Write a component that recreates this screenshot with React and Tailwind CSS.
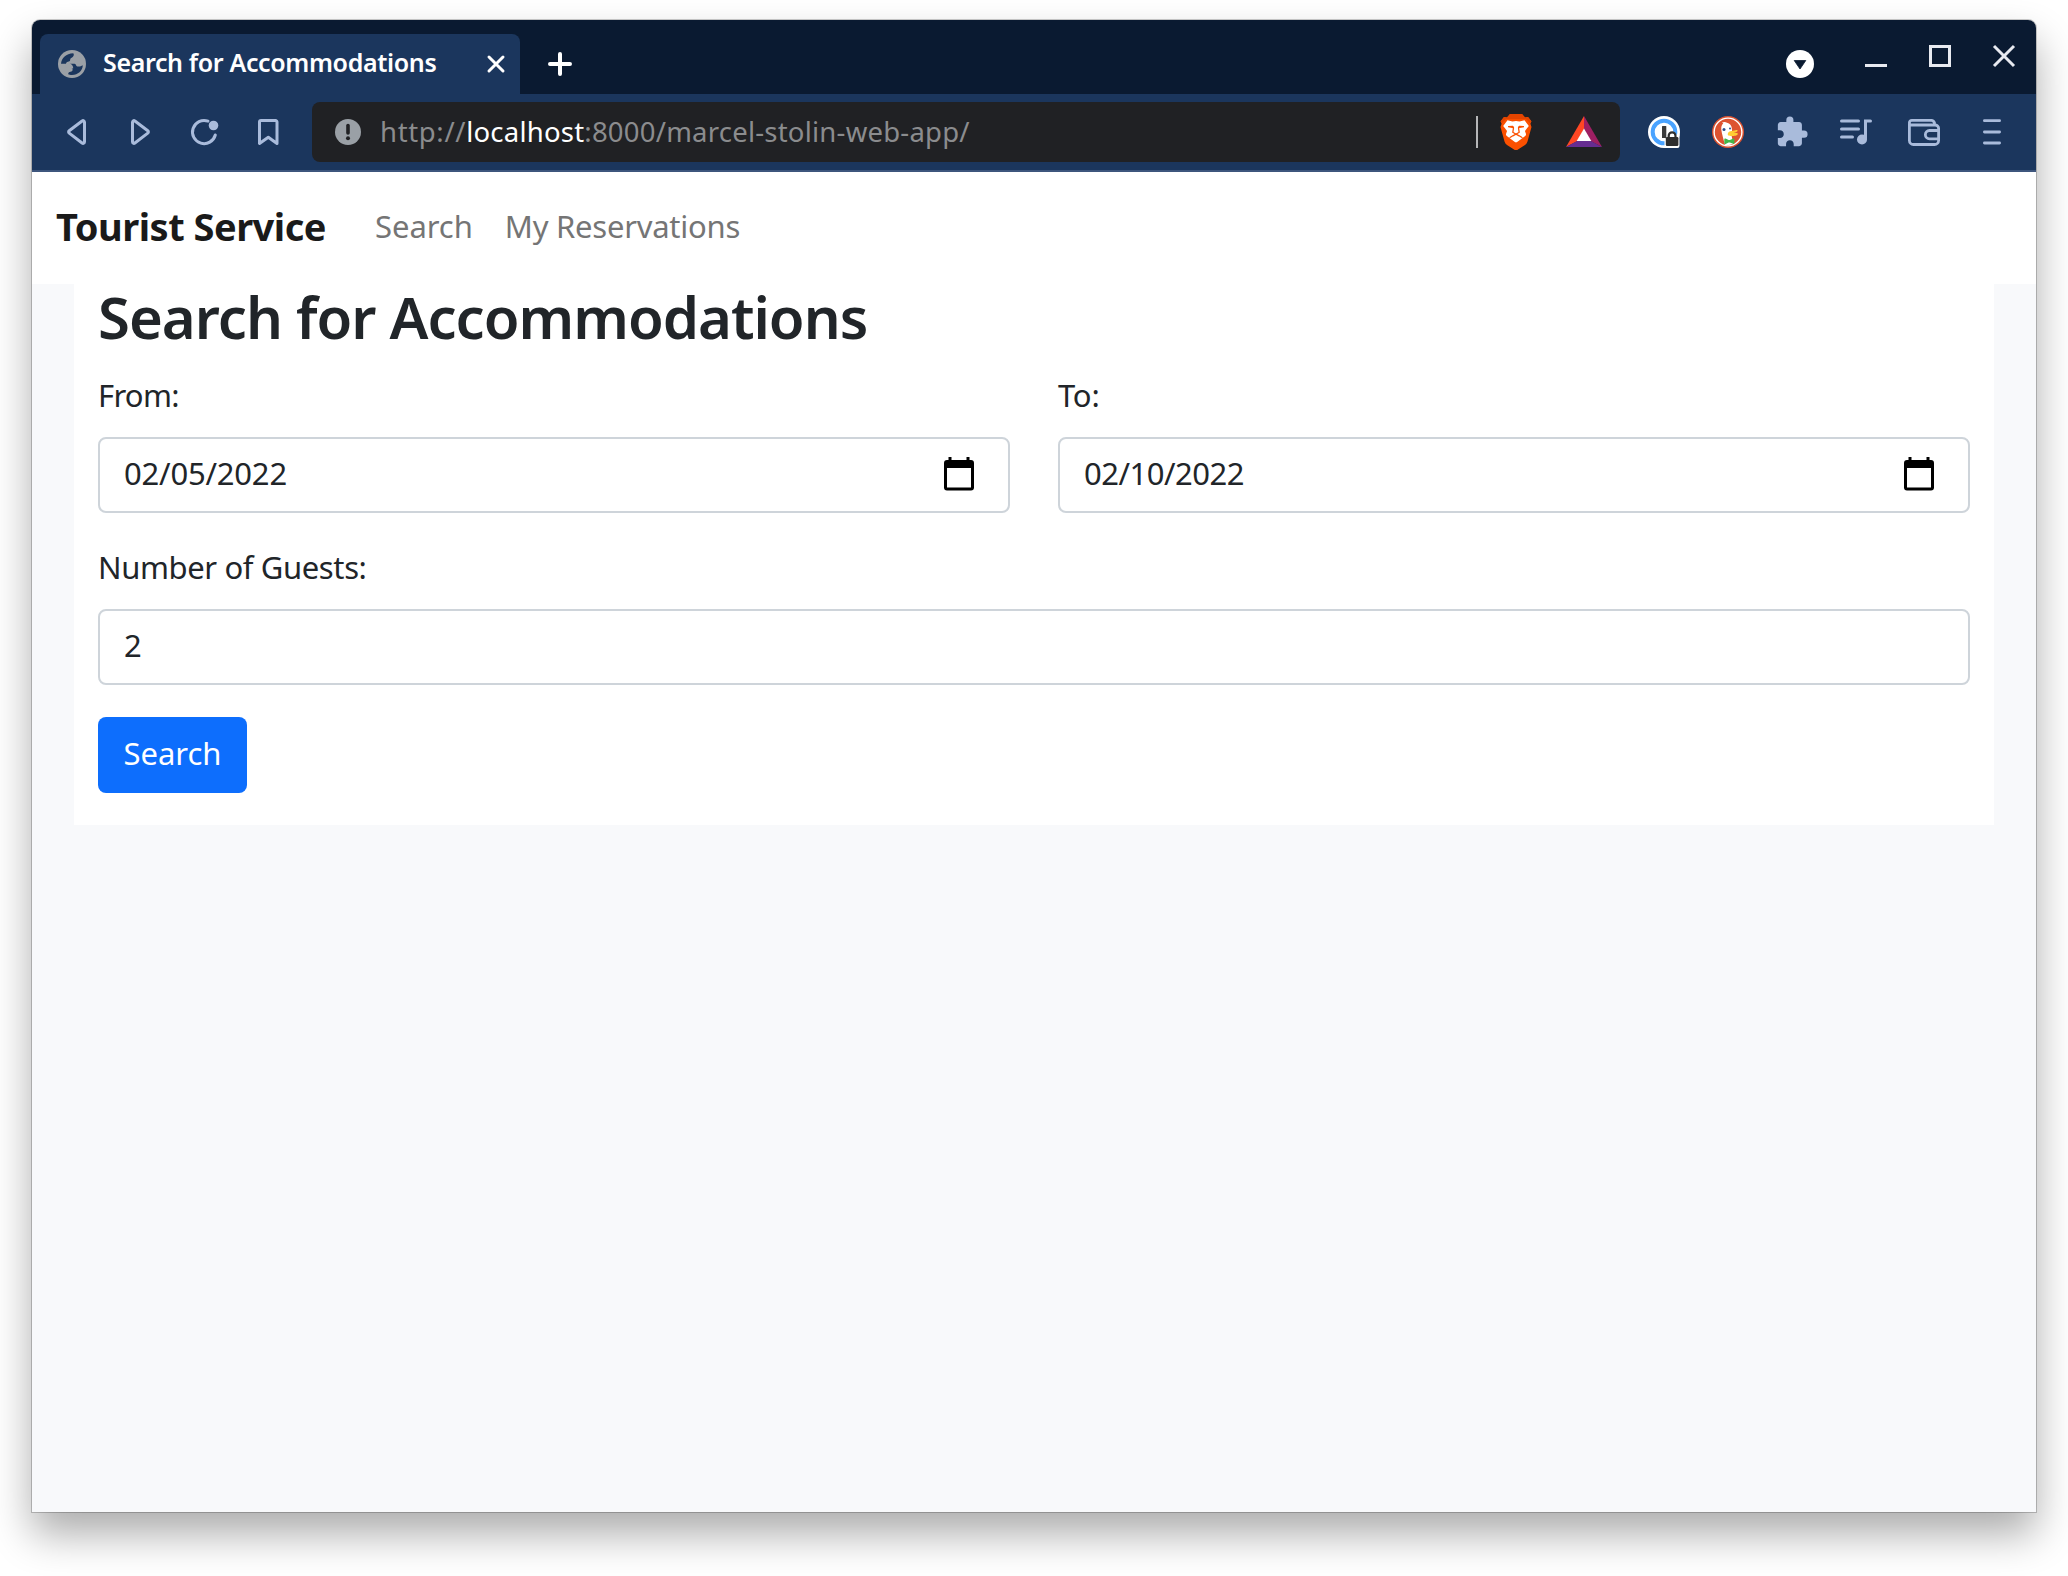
import { MdExtension } from "react-icons/md";

function ToolButton({ label, wide, children }) {
  return (
    <button
      aria-label={label}
      className={`flex h-16 shrink-0 items-center justify-center text-[#a9bbdb] ${wide ? "w-[72px]" : "w-16"}`}
    >
      {children}
    </button>
  );
}

function Icon({ children }) {
  return (
    <svg
      viewBox="0 0 32 32"
      className="block size-8 shrink-0"
      fill="none"
      stroke="currentColor"
      strokeWidth="3"
      strokeLinecap="round"
      strokeLinejoin="round"
    >
      {children}
    </svg>
  );
}

function GlobeIcon() {
  return (
    <svg viewBox="0 0 28 28" className="block size-7 shrink-0">
      <circle cx="14" cy="14" r="14" fill="#9ba0a6" />
      <path
        d="M3 13.800C3.500 8.200 8 3.800 15.300 3.300c1.300 1.700.2 3.500-2 4.700-1.400.7-.9 1.800-1.300 2.700-.5 1-1.900.8-2.800 1.200-.8.500-.6 1.900-1.900 1.900z"
        fill="#1b365d"
      />
      <path
        d="M11.500 13.800h5c1.300 0 1.300 1.200 2 2.100.7.900 2.300.7 3.500.5l2.800-1.200C24.600 20.500 20 25 14 25c-1.500 0-3-.3-3.800-.7 0-1.700.7-2.500 2.300-2.600 1.500 0 2.100-.8 2.100-2.200 0-1.200-.9-1.600-2-1.700-1.300-.1-3.300.2-4.100-.8-.9-1-.4-3.200 3-3.200z"
        fill="#1b365d"
      />
      <path d="M8.600 12.500c2 0 3 .3 4.600 1.700 1.300 1.200 2 1.900 2 4.300l-2.300-.2c-2.500-.2-4.800.3-5.800-1.600z" fill="#9ba0a6" />
    </svg>
  );
}

function BraveIcon() {
  return (
    <svg viewBox="0 0 32 36" className="block h-9 w-8 shrink-0">
      <path
        d="M10 0h12l3 3.400 3-.4 3.400 4.200-1 2.600 1.100 3.200-4 14.600a6 6 0 0 1-2.500 3.400l-7.400 4.700a3 3 0 0 1-3.200 0L7 31a6 6 0 0 1-2.500-3.400L.5 13l1.100-3.200-1-2.600L4 3l3 .4z"
        fill="#fb5000"
      />
      <path d="M10 0h12l3 3.400 3-.4 3.400 4.200-1.400 2L26 5H6L2 9.200.6 7.200 4 3l3 .4z" fill="#e44400" />
      <path
        d="M16 7l3.500.5L24.500 6.300l4.300 5.700-3.500 4.500c-.4.600-.3 1.200.2 1.900l.5 1.500c.2.900-.2 1.500-.8 2.200l-2.700 2-5 3.700-1.500.7-1.500-.7-5-3.700-2.700-2c-.6-.7-1-1.300-.8-2.200l.5-1.500c.5-.7.6-1.300.2-1.900L3.200 12l4.300-5.700 5 1.200z"
        fill="#fff"
      />
      <path d="M8 12l4.800-.2 1.300 1.200-.3 1.400-1.600-.3L8 13.300zM24 12l-4.800-.2-1.300 1.200.3 1.400 1.600-.3 4.200-.8z" fill="#fb5000" />
      <g stroke="#fb5000" strokeWidth="1.300" fill="none" strokeLinejoin="round" strokeLinecap="round">
        <path d="M13.500 14l-.7 4.300 3.200 1.900 3.200-1.900-.7-4.300" />
        <path d="M10 23.500l2.800-1.700L16 20.200l3.200 1.600 2.800 1.700" />
      </g>
      <path d="M12 24.200l4-2.300 4 2.300-4 3.600z" fill="#fff" />
    </svg>
  );
}

function RewardsIcon() {
  return (
    <svg viewBox="0 0 36 32" className="block h-8 w-9 shrink-0">
      <path d="M18 0L0 31l11.500-6L18 13z" fill="#ff4724" />
      <path d="M18 0l18 31-11.500-6L18 13z" fill="#9e1f63" />
      <path d="M0 31l11-6h14l11 6z" fill="#662d91" />
      <path d="M18 12.500L25.300 25H10.700z" fill="#fff" />
    </svg>
  );
}

function PasswordIcon() {
  return (
    <svg viewBox="0 0 32 32" className="block size-8 shrink-0">
      <circle cx="16" cy="16" r="16" fill="#fff" />
      <circle cx="16" cy="16" r="11.300" fill="none" stroke="#4aa3ff" strokeWidth="4" />
      <path d="M16.500 21.500L20 18c1-2 2.500-2.500 4-2.500s3.500 1 4 3h3.500V30a2 2 0 0 1-2 2h-13z" fill="#fff" />
      <rect x="14" y="10" width="4.300" height="12" rx=".6" fill="#3a3a3a" />
      <rect x="17.800" y="21" width="12.600" height="9" rx="1.300" fill="#2e2e2e" />
      <path d="M20.700 21.500v-1.700a3.400 3.400 0 0 1 6.800 0v1.700" fill="none" stroke="#2e2e2e" strokeWidth="2.200" />
    </svg>
  );
}

function DuckIcon() {
  return (
    <svg viewBox="0 0 32 32" className="block size-8 shrink-0">
      <circle cx="16" cy="16" r="16" fill="#dd5331" />
      <circle cx="16" cy="16" r="13.900" fill="none" stroke="#fff" strokeWidth="1.400" />
      <path
        d="M13 28.700C11.500 23.500 9.800 18 9.300 13.800c-.3-3 .4-5 2-6.200L10 6.600c1.900-.9 3.600-.7 5 .1 2.900.5 4.600 2.700 4.900 6 .3 3-.2 5-.2 7.500l1.500 7.200c-2.600 1.400-5.500 1.900-8.200 1.300z"
        fill="#fff"
      />
      <path
        d="M15.700 18c.3-1.900 2-2.600 4-2.900 2-.2 4.500-1.500 5.800-.8.700.9-1.700 2.300-4 2.800 2 .1 4-.3 4.300.7.200 1.400-2.600 2.200-5.200 2.200-2.700 0-5.100-.3-4.900-2z"
        fill="#fc3"
      />
      <circle cx="12" cy="13.600" r="1.500" fill="#2d4f8e" />
      <circle cx="18" cy="12.400" r="1" fill="#2d4f8e" />
      <path
        d="M12.300 23.200c0-.8.600-1 1.300-.6l3 1.400h1.300l3.400-1.500c.7-.3 1.100 0 1.100.7v4c0 .7-.5.9-1.200.6l-3.300-1.400h-1.300l-3 1.500c-.7.3-1.300 0-1.300-.7z"
        fill="#43b649"
      />
    </svg>
  );
}

function CalendarIcon() {
  return (
    <svg viewBox="0 0 30 34" className="mb-[3px] block h-[34px] w-[30px] shrink-0">
      <path
        d="M4.500 0h3v3h15V0h3v3H27a3 3 0 0 1 3 3v24.500a3 3 0 0 1-3 3H3a3 3 0 0 1-3-3V6a3 3 0 0 1 3-3h1.500zM3 11v19.500h24V11z"
        fill="#000"
        fillRule="evenodd"
      />
    </svg>
  );
}

function TabStrip() {
  return (
    <div className="flex h-[74px] items-end bg-[#0a1a31]">
      <div className="ml-2 flex h-[60px] w-[480px] items-center rounded-t-lg bg-[#1b365d] pl-[18px] pr-[14px]">
        <GlobeIcon />
        <span className="ml-[17px] flex-1 whitespace-nowrap pb-1 text-[25px] leading-[32px] font-[560] tracking-[-0.36px] text-white">
          Search for Accommodations
        </span>
        <svg viewBox="0 0 20 20" className="size-5 shrink-0" stroke="#fff" strokeWidth="3" strokeLinecap="round">
          <path d="M3 3l14 14M17 3L3 17" />
        </svg>
      </div>
      <div className="flex h-[60px] w-20 items-center justify-center">
        <svg viewBox="0 0 24 24" className="size-6" stroke="#fff" strokeWidth="4" strokeLinecap="round">
          <path d="M12 2v20M2 12h20" />
        </svg>
      </div>
      <div className="ml-auto flex h-[60px] items-center">
        <svg viewBox="0 0 28 28" className="mr-[30px] size-7">
          <circle cx="14" cy="14" r="14" fill="#fff" />
          <path d="M8.200 10.500h11.600L14 19z" fill="#0a1a31" stroke="#0a1a31" strokeWidth=".8" strokeLinejoin="round" />
        </svg>
        <div className="mb-4 flex text-[#e8eaf0]">
          <div className="flex w-16 justify-center">
            <svg viewBox="0 0 24 24" className="size-6">
              <path d="M1 20h22v3H1z" fill="currentColor" />
            </svg>
          </div>
          <div className="flex w-16 justify-center">
            <svg viewBox="0 0 24 24" className="size-6">
              <path d="M2.500 2.500h19v19h-19z" fill="none" stroke="currentColor" strokeWidth="3" />
            </svg>
          </div>
          <div className="flex w-16 justify-center">
            <svg viewBox="0 0 24 24" className="size-6">
              <path d="M2 2l20 20M22 2L2 22" stroke="currentColor" strokeWidth="3" />
            </svg>
          </div>
        </div>
      </div>
    </div>
  );
}

function Toolbar() {
  return (
    <div className="flex h-[78px] items-center border-b-2 border-[#3e567d] bg-[#1b365d] pl-3">
      <ToolButton label="Back">
        <Icon>
          <path d="M24.500 6.300c0-1.600-1.300-2.200-2.400-1.300L9.200 14.800c-.8.600-.8 1.700 0 2.300l12.900 9.900c1.100.9 2.400.3 2.400-1.300z" />
        </Icon>
      </ToolButton>
      <ToolButton label="Forward">
        <Icon>
          <path d="M8.500 6.300c0-1.600 1.300-2.200 2.400-1.300l12.900 9.800c.8.600.8 1.700 0 2.300L10.900 27c-1.100.9-2.400.3-2.400-1.300z" />
        </Icon>
      </ToolButton>
      <ToolButton label="Reload">
        <Icon>
          <path d="M27.300 19A11.600 11.600 0 1 1 20 5.100" />
          <circle cx="25.500" cy="9.500" r="4.800" fill="currentColor" stroke="none" />
        </Icon>
      </ToolButton>
      <ToolButton label="Bookmark">
        <Icon>
          <path d="M7.500 6a1.500 1.500 0 0 1 1.500-1.500h14.500A1.500 1.500 0 0 1 25 6v21.500l-8.700-6.300-8.800 6.300z" />
        </Icon>
      </ToolButton>

      <div className="ml-3 flex h-[60px] w-[1308px] items-center rounded-lg bg-[#202124] pl-[23px] pr-[18px]">
        <svg viewBox="0 0 26 26" className="size-[26px] shrink-0">
          <circle cx="13" cy="13" r="13" fill="#9aa0a6" />
          <path d="M13 6.500v7.500" stroke="#202124" strokeWidth="3.600" strokeLinecap="round" />
          <circle cx="13" cy="19.300" r="2" fill="#202124" />
        </svg>
        <div className="ml-[19px] flex-1 whitespace-nowrap pb-px text-[27.500px] leading-[40px] tracking-[0.22px] text-[#8b8c8e]">
          <span className="tracking-[0.65px]">http://</span>
          <span className="text-white">localhost</span>
          <span>:8000/marcel-stolin-web-app/</span>
        </div>
        <div className="mr-[22px] h-8 w-0.5 bg-[#b5b6b8]" />
        <BraveIcon />
        <div className="ml-[34px]">
          <RewardsIcon />
        </div>
      </div>

      <div className="ml-3 flex items-center">
        <ToolButton label="Passwords">
          <PasswordIcon />
        </ToolButton>
        <ToolButton label="Privacy">
          <DuckIcon />
        </ToolButton>
        <ToolButton label="Extensions">
          <MdExtension className="size-[34px]" />
        </ToolButton>
        <ToolButton label="Playlist">
          <svg viewBox="0 0 32 26" className="h-[26px] w-8" fill="none" stroke="currentColor" strokeWidth="3" strokeLinecap="round">
            <path d="M1.500 2h17M1.500 10h17M1.500 18h11M30.500 2h-5v17.500" />
            <circle cx="22" cy="20.500" r="5" fill="currentColor" stroke="none" />
          </svg>
        </ToolButton>
        <ToolButton label="Wallet" wide>
          <svg viewBox="0 0 32 27" className="h-[27px] w-8" fill="none" stroke="currentColor" strokeWidth="2.800" strokeLinejoin="round" strokeLinecap="round">
            <path d="M1.400 4.800v16.700a4 4 0 0 0 4 4h21.200a4 4 0 0 0 4-4V9.500a3.500 3.500 0 0 0-3.500-3.500H3.500a2 2 0 0 1-2.100-2.200c0-1.500 1-2.400 2.400-2.400h19.700c1.500 0 2.500 1 3 2.600" />
            <path d="M30 11.500h-8.500a4.100 4.100 0 0 0 0 8.300H30" />
          </svg>
        </ToolButton>
        <ToolButton label="Menu">
          <svg viewBox="0 0 18 26" className="h-[26px] w-[18px]" stroke="currentColor" strokeWidth="2.800" strokeLinecap="round">
            <path d="M1.400 1.700h15.200M1.400 13h15.200M1.400 24h15.200" />
          </svg>
        </ToolButton>
      </div>
    </div>
  );
}

function Field({ label, value, date, labelClass = "", valueClass = "" }) {
  return (
    <div className="flex-1">
      <div className={`h-16 text-[31px] leading-[44px] ${labelClass}`}>{label}</div>
      <div className="flex h-[76px] items-center justify-between rounded-lg border-2 border-[#ced4da] bg-white pl-6 pr-[34px]">
        <span className={`pb-1 text-[31px] leading-[44px] ${valueClass}`}>{value}</span>
        {date && <CalendarIcon />}
      </div>
    </div>
  );
}

export default function App() {
  return (
    <div className="h-[1576px] w-[2068px] overflow-hidden bg-white px-8 pt-5 font-['Noto_Sans',sans-serif] text-[#212529]">
      <div className="flex h-[1492px] flex-col rounded-t-lg bg-[#f8f9fb] shadow-[0_0_0_1px_rgba(0,0,0,0.2),0_22px_42px_rgba(0,0,0,0.33)]">
        <div className="overflow-hidden rounded-t-lg">
          <TabStrip />
          <Toolbar />
        </div>

        <nav className="flex h-28 items-center bg-white pb-1 pl-6">
          <span className="text-[38px] leading-[56px] font-bold tracking-[-0.5px] text-[#1a1a1a]">Tourist Service</span>
          <span className="ml-[49px] text-[31px] leading-[48px] tracking-[-0.05px] text-[#757575]">Search</span>
          <span className="ml-[32px] text-[31px] leading-[48px] tracking-[-0.25px] text-[#757575]">My Reservations</span>
        </nav>

        <main className="mx-[42px] h-[541px] bg-white px-6">
          <h1 className="h-[89px] text-[58px] leading-[65px] font-[580] tracking-[-1px]">Search for Accommodations</h1>
          <div className="flex gap-12">
            <Field label="From:" value="02/05/2022" date labelClass="tracking-[-0.7px]" valueClass="tracking-[-0.2px]" />
            <Field label="To:" value="02/10/2022" date labelClass="tracking-[-0.2px]" valueClass="tracking-[-0.5px]" />
          </div>
          <div className="mt-8 flex">
            <Field label="Number of Guests:" value="2" labelClass="tracking-[-0.38px]" />
          </div>
          <button className="mt-8 flex h-[76px] w-[149px] items-center justify-center rounded-lg bg-[#0d6efd] pb-1 text-[31px] tracking-[-0.05px] text-white">
            Search
          </button>
        </main>
      </div>
    </div>
  );
}
